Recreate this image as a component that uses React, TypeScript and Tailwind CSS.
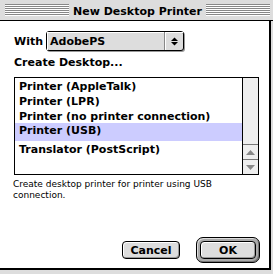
import React from "react";

const Stripes = ({ className }: { className: string }) => (
  <div className={`flex flex-col h-[12px] ${className}`}>
    {[0, 1, 2, 3, 4, 5].map((i) => (
      <React.Fragment key={i}>
        <div className="h-px bg-[#888888]" />
        <div className="h-px bg-white" />
      </React.Fragment>
    ))}
  </div>
);

const rows = [
  { label: "Printer (AppleTalk)", sel: false },
  { label: "Printer (LPR)", sel: false },
  { label: "Printer (no printer connection)", sel: false },
  { label: "Printer (USB)", sel: true },
  { label: "Translator (PostScript)", sel: false },
];

export default function App() {
  return (
    <div className="w-[273px] h-[274px] bg-[#dddddd] overflow-hidden text-black font-['DejaVu_Sans',sans-serif]">
      {/* Title bar */}
      <div className="h-[21px] flex items-start border-b border-black bg-[#dddddd]">
        <Stripes className="flex-1 mt-[4px] ml-[5px]" />
        <div className="px-[4px] pt-[3px] text-[11px] leading-[17px] font-bold whitespace-nowrap">
          New Desktop Printer
        </div>
        <Stripes className="flex-1 mt-[4px] mr-[3px]" />
      </div>

      {/* Content */}
      <div className="w-[271px] h-[249px] bg-white border-r-2 border-b-2 border-black flex flex-col">
        <div className="mt-[10px] pl-[14px] flex items-center h-[20px]">
          <div className="w-[32px] text-[11px] leading-[13px] font-bold">With</div>
          <div className="w-[138px] h-[20px] rounded-[3px] border border-black bg-[#dddddd] flex shadow-[1px_1px_0_#999999]">
            <div className="flex-1 flex items-center pl-[3px] text-[11px] leading-[13px] font-bold shadow-[inset_1px_1px_0_#ffffff]">
              AdobePS
            </div>
            <div className="w-[19px] border-l border-[#888888] flex items-center justify-center shadow-[inset_1px_1px_0_#ffffff]">
              <svg width="7" height="9" viewBox="0 0 7 9">
                <polygon points="0,4 7,4 3.5,0.5" fill="#000" />
                <polygon points="0,5 7,5 3.5,8.5" fill="#000" />
              </svg>
            </div>
          </div>
        </div>

        <div className="mt-[5px] pl-[14px] text-[11px] leading-[13px] font-bold">Create Desktop...</div>

        <div className="mt-[8px] ml-[14px] w-[245px] h-[98px] border border-black flex">
          <div className="flex-1 flex flex-col">
            {rows.map((r) =>
              r.sel ? (
                <div key={r.label} className="h-[18px] bg-[#ccccff] pl-[4px] text-[11px] leading-[16px] font-bold whitespace-nowrap">
                  {r.label}
                </div>
              ) : (
                <div key={r.label} className="h-[15px] pl-[4px] pt-[1px] text-[11px] leading-[15px] font-bold whitespace-nowrap">
                  {r.label}
                </div>
              )
            )}
          </div>
          <div className="w-[16px] border-l border-black bg-[#eeeeee] flex flex-col">
            <div className="flex-1" />
            <div className="h-[15px] border-t border-[#777777] flex items-center justify-center">
              <svg width="9" height="5" viewBox="0 0 9 5">
                <polygon points="0,5 9,5 4.5,0" fill="#888888" />
              </svg>
            </div>
            <div className="h-[15px] border-t border-[#777777] flex items-center justify-center">
              <svg width="9" height="5" viewBox="0 0 9 5">
                <polygon points="0,0 9,0 4.5,5" fill="#888888" />
              </svg>
            </div>
          </div>
        </div>

        <div className="mt-[4px] pl-[13px] text-[9px] leading-[11px]">
          Create desktop printer for printer using USB
          <br />
          connection.
        </div>

        <div className="flex-1" />

        <div className="flex justify-end items-center gap-[16px] pr-[9px] mb-[5px]">
          <div className="w-[58px] h-[18px] rounded-[4px] border border-black bg-[#dddddd] flex items-center justify-center text-[11px] leading-[13px] font-bold shadow-[inset_1px_1px_0_#ffffff,inset_-1px_-1px_0_#999999]">
            Cancel
          </div>
          <div className="w-[64px] h-[26px] rounded-[7px] border border-black bg-[#aaaaaa] p-[3px] shadow-[inset_1px_1px_0_#dddddd,inset_-1px_-1px_0_#777777]">
            <div className="w-full h-full rounded-[4px] border border-black bg-[#dddddd] flex items-center justify-center text-[11px] leading-[13px] font-bold shadow-[inset_1px_1px_0_#ffffff,inset_-1px_-1px_0_#999999]">
              OK
            </div>
          </div>
        </div>
      </div>
    </div>
  );
}
